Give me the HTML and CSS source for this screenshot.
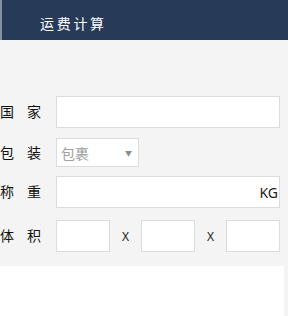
FILE: index.html
```html
<!DOCTYPE html>
<html lang="zh-CN">
<head>
    <meta charset="UTF-8">
    <meta name="viewport" content="width=device-width, initial-scale=1.0">
    <title>运费计算</title>
    <link rel="stylesheet" href="styles.css">
</head>
<body>
    <div class="header">
        <h1>运费计算</h1>
    </div>

    <div class="form">
        <div class="row row-country">
            <label class="label"><span>国</span><span>家</span></label>
            <input class="field field-wide" type="text">
        </div>

        <div class="row row-pack">
            <label class="label"><span>包</span><span>装</span></label>
            <div class="select">
                <span class="select-text">包裹</span>
                <span class="select-arrow">▼</span>
            </div>
        </div>

        <div class="row row-weight">
            <label class="label"><span>称</span><span>重</span></label>
            <div class="field field-wide field-unit">
                <span class="unit">KG</span>
            </div>
        </div>

        <div class="row row-size">
            <label class="label"><span>体</span><span>积</span></label>
            <input class="field field-small" type="text">
            <span class="times">X</span>
            <input class="field field-small" type="text">
            <span class="times">X</span>
            <input class="field field-small" type="text">
        </div>
    </div>

    <div class="result"></div>
</body>
</html>
```

FILE: styles.css
```css
* {
    box-sizing: border-box;
    margin: 0;
    padding: 0;
}

html, body {
    height: 100%;
}

body {
    background-color: #f4f4f4;
    font-family: "Noto Sans", "Noto Sans CJK SC", sans-serif;
    color: #222;
    font-size: 13px;
    overflow: hidden;
}

.header {
    height: 40px;
    background-color: #273b59;
    border-left: 2px solid #8592a6;
    padding: 15px 0 0 38px;
}

.header h1 {
    font-size: 14px;
    font-weight: normal;
    color: #fff;
    letter-spacing: 2.7px;
    line-height: 18px;
}

.form {
    width: 284px;
    padding-top: 56px;
}

.row {
    display: flex;
    align-items: center;
}

.row-pack {
    margin-top: 10px;
}

.row-weight {
    margin-top: 9px;
}

.row-size {
    margin-top: 12px;
}

.label {
    width: 41px;
    margin-right: 15px;
    display: flex;
    justify-content: space-between;
    font-size: 14px;
    line-height: 16px;
    color: #111;
}

.field {
    height: 32px;
    background-color: #fff;
    border: 1px solid #dcdcdc;
    outline: none;
    font-family: inherit;
}

.field-wide {
    width: 224px;
}

.field-unit {
    display: flex;
    align-items: center;
    justify-content: flex-end;
    padding-right: 1px;
}

.unit {
    font-size: 14px;
    color: #222;
}

.select {
    width: 83px;
    height: 29px;
    background-color: #fff;
    border: 1px solid #dcdcdc;
    display: flex;
    align-items: center;
    justify-content: space-between;
    padding: 0 6px 0 4px;
}

.select-text {
    color: #a0a0a0;
    font-size: 14px;
}

.select-arrow {
    color: #8c8c8c;
    font-size: 7px;
}

.field-small {
    width: 54px;
}

.times {
    width: 31px;
    text-align: center;
    font-size: 12px;
    color: #222;
}

.result {
    width: 284px;
    height: 60px;
    margin-top: 14px;
    background-color: #fff;
}
```
